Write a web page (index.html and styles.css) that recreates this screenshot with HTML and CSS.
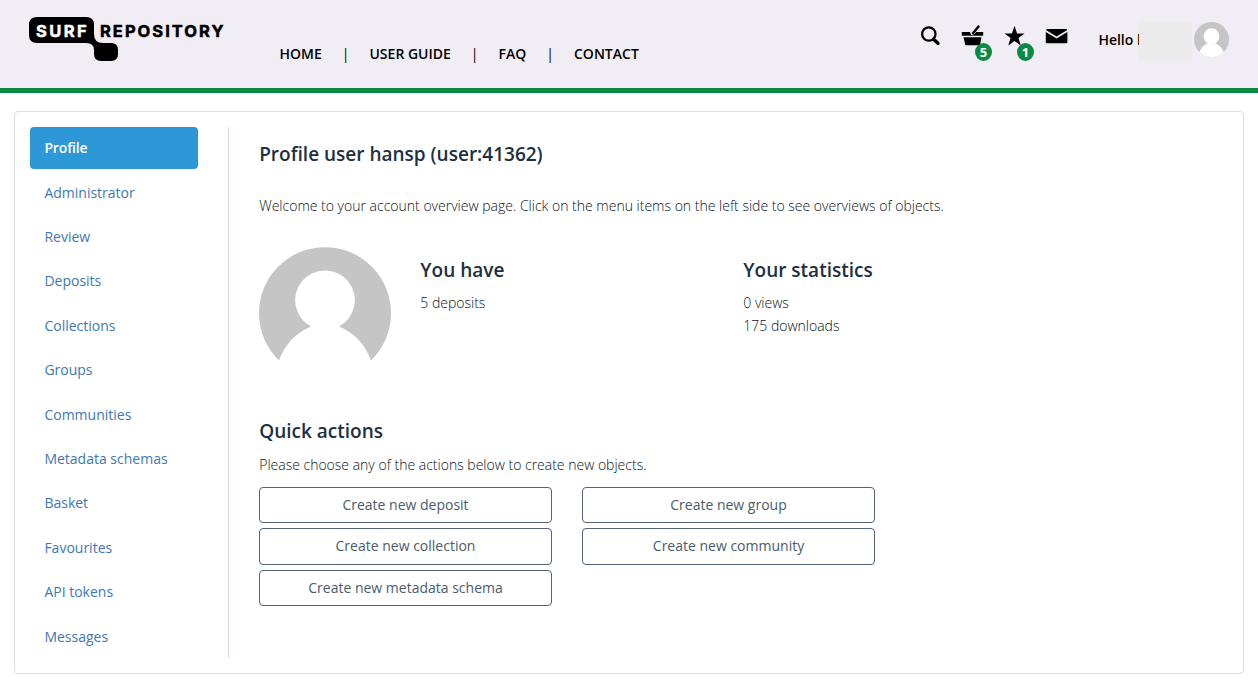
FILE: index.html
```
<!DOCTYPE html>
<html lang="en">
<head>
<meta charset="utf-8">
<title>SURF Repository - Profile</title>
<link rel="stylesheet" href="styles.css">
</head>
<body>
<header class="header">
  <svg class="logo" width="200" height="50" viewBox="0 0 200 50">
    <path d="M8 3H57Q65 3 65 11V20Q65 29 74 29H82Q89 29 89 36V40Q89 47 82 47H72Q65 47 65 40V36Q65 29 57 29H8Q0 29 0 21V11Q0 3 8 3Z"/>
    <text class="logo-text logo-light" x="7" y="22.5" textLength="50.8">SURF</text>
    <text class="logo-text" x="71" y="22.5" textLength="123.5">REPOSITORY</text>
  </svg>
  <nav class="main-nav">
    <a>HOME</a><span class="sep">|</span><a>USER GUIDE</a><span class="sep">|</span><a>FAQ</a><span class="sep">|</span><a>CONTACT</a>
  </nav>
  <div class="tools">
    <a class="tool"><svg width="24" height="24" viewBox="0 0 24 24"><circle cx="9.8" cy="10" r="6.7" fill="none" stroke="#000" stroke-width="2.3"/><path d="M14.6 15.2l4.3 4" stroke="#000" stroke-width="3.5" stroke-linecap="round"/></svg></a>
    <a class="tool"><svg width="24" height="24" viewBox="0 0 24 24"><path d="M.8 8h8.1l1.2 2.5q1.3 1.3 2.7 0L15.2 8h7v3.8H.8zM2.5 13.2h18L19 21.3H4.4z"/><path d="M12 9.2L17.5 2.5" stroke="#000" stroke-width="2.4" stroke-linecap="round"/></svg><span class="badge">5</span></a>
    <a class="tool"><svg width="24" height="24" viewBox="0 0 24 24"><path d="M11.5 1.8l2.6 7.6h7.5l-6.1 4.5 2.3 7.5-6.3-4.5-6.2 4.5 2.3-7.5-6.1-4.5H9z"/></svg><span class="badge">1</span></a>
    <a class="tool"><svg width="24" height="24" viewBox="0 0 24 24"><path d="M1.3 5h20.6v1.3l-10.3 6.2L1.3 6.3zM.8 8l10.8 6.4L22.4 8v10.3q0 1-1 1H1.8q-1 0-1-1z"/></svg></a>
  </div>
  <div class="user"><span class="hello">Hello l</span><span class="mask"></span>
    <svg width="35" height="35" viewBox="0 0 132 132"><defs><clipPath id="disc"><circle cx="66" cy="66" r="66"/></clipPath></defs><circle cx="66" cy="66" r="66" fill="#c5c5c5"/><g clip-path="url(#disc)" fill="#fff"><circle cx="66" cy="54" r="30"/><path d="M20 114Q28 91 50 81H82Q104 91 112 114V132H20Z"/></g></svg>
  </div>
</header>
<main class="panel">
  <nav class="side">
    <a class="item active">Profile</a><a class="item">Administrator</a><a class="item">Review</a><a class="item">Deposits</a><a class="item">Collections</a><a class="item">Groups</a><a class="item">Communities</a><a class="item">Metadata schemas</a><a class="item">Basket</a><a class="item">Favourites</a><a class="item">API tokens</a><a class="item">Messages</a>
  </nav>
  <section class="content">
    <h1 class="title">Profile user hansp (user:41362)</h1>
    <p class="intro">Welcome to your account overview page. Click on the menu items on the left side to see overviews of objects.</p>
    <div class="summary">
      <svg width="132" height="132" viewBox="0 0 132 132"><path fill="#c5c5c5" fill-rule="evenodd" d="M20 113.5A66 66 0 1 1 112 113.5Q103 89 80 79.5A29.8 29.8 0 1 0 52 79.5Q29 89 20 113.5Z"/></svg>
      <div class="stat"><h2 class="heading">You have</h2><p>5 deposits</p></div>
      <div class="stat"><h2 class="heading">Your statistics</h2><p>0 views</p><p>175 downloads</p></div>
    </div>
    <h2 class="heading quick">Quick actions</h2>
    <p>Please choose any of the actions below to create new objects.</p>
    <div class="actions">
      <a class="btn">Create new deposit</a><a class="btn">Create new group</a>
      <a class="btn">Create new collection</a><a class="btn">Create new community</a>
      <a class="btn">Create new metadata schema</a>
    </div>
  </section>
</main>
</body>
</html>
```
FILE: styles.css
```
* { box-sizing: border-box; }
body { margin: 0; background: #fff; color: #08131c; font: 300 14px/23px "Open Sans", sans-serif; }
h1, h2, p { margin: 0; }
svg { display: block; flex: none; }

.header { display: flex; align-items: flex-start; height: 93px; padding-left: 29px; background: #f0eef4; border-bottom: 5px solid #0a8a43; color: #000; }
.logo { margin-top: 14px; }
.logo-text { font: 700 16.5px Inter, sans-serif; stroke: #000; stroke-width: 0.5; stroke-linejoin: round; }
.logo-light { fill: #fff; stroke: #fff; }
.main-nav { display: flex; margin: 42px 0 0 50.5px; width: 359.4px; justify-content: space-between; font-weight: 600; white-space: nowrap; }
.sep { font-weight: 400; }
.tools { display: flex; gap: 18px; margin: 24px 0 0 280.1px; }
.tool { position: relative; }
.badge { position: absolute; left: 14px; top: 19px; width: 17px; height: 18px; border-radius: 50%; background: #0a8a43; color: #fff; font-size: 13px; font-weight: 700; line-height: 18px; text-align: center; }
.user { display: flex; align-items: center; margin: 21px 0 0 29.4px; font-weight: 600; }
.hello { width: 40.6px; margin-top: -2px; white-space: nowrap; }
.mask { position: relative; width: 53px; height: 39px; margin-right: 2px; background: #ebebeb; }
.user svg { margin-top: -2px; }

.panel { display: flex; height: 563px; margin: 18px 14px 0; padding: 15px; border: 1px solid #ddd; border-radius: 4px; }
.side { display: flex; flex-direction: column; gap: 2px; width: 199px; padding-right: 30px; border-right: 1px solid #d0dfeb; }
.item { height: 42.43px; padding-left: 14.4px; border-radius: 4px; color: #3e78b4; font-weight: 400; line-height: 42.6px; }
.item:nth-child(2) { line-height: 44px; }
.active { background: #2c98d5; color: #fff; font-weight: 600; letter-spacing: -0.15px; }
.content { width: 760px; padding: 14px 0 0 30.2px; }
.title, .heading { color: #1c3042; font-size: 19px; font-weight: 600; line-height: 26px; }
.intro { margin-top: 27px; }
.summary { display: flex; margin-top: 30px; }
.summary svg { margin-left: -0.2px; }
.stat { flex: none; width: 323px; margin-top: 10px; }
.stat:nth-child(2) { margin-left: 29.3px; }
.stat .heading { margin-bottom: 8px; }
.quick { margin: 39px 0 9px; }
.actions { display: grid; grid-template-columns: 293px 293px; gap: 5px 30px; margin: 11px 0 0 -0.2px; }
.btn { height: 36.43px; border: 1px solid #526475; border-radius: 4px; color: #4a5b6b; font-weight: 400; line-height: 34px; text-align: center; }
```
